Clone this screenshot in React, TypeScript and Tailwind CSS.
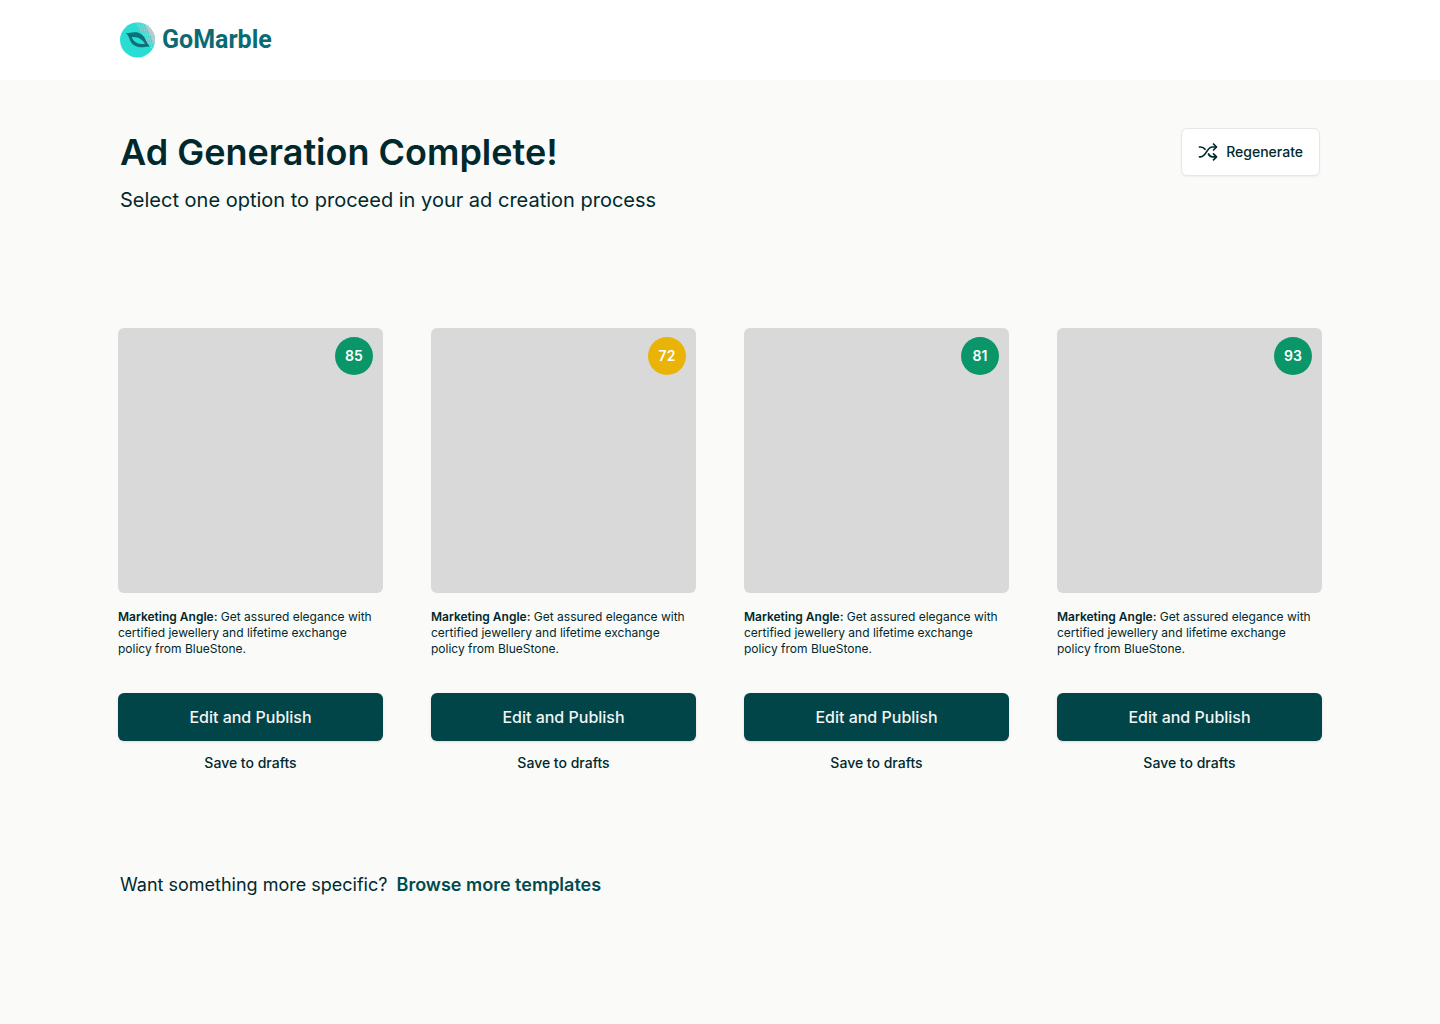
import { clsx } from 'clsx';

const ads = [
  { id: 1, score: 85 },
  { id: 2, score: 72 },
  { id: 3, score: 81 },
  { id: 4, score: 93 },
];

// staggered grey dots that fade the grey edge of the marble into the teal
const dots: [number, number][] = [];
for (let row = 0; row < 20; row++) {
  for (let col = 0; col < 5; col++) {
    dots.push([16 + row * 0.75 + col * 2 + (row % 2), 0.7 + row * 1.3]);
  }
}

function LogoMark() {
  return (
    <svg viewBox="0 0 36 36" className="h-9 w-9" aria-hidden="true">
      <defs>
        <clipPath id="marble">
          <circle cx="17.5" cy="18" r="17.5" />
        </clipPath>
      </defs>
      <g clipPath="url(#marble)">
        <rect width="36" height="36" fill="#2addd3" />
        <path d="M23 0C28 7 30 13 33 19L35 28L36 30V0Z" fill="#bcc9ca" />
        {dots.map(([x, y], i) => (
          <circle key={i} cx={x} cy={y} r="0.6" fill="#b4cccd" />
        ))}
      </g>
      <path
        fillRule="evenodd"
        fill="#0b7079"
        d="M6 11C9 11.2 12 9.8 16 10.2C21 10.8 24 14 25.5 17.5C26.5 20 28 22.5 30 24.5C26 24 23 26 18.5 25C13.5 24 10.5 20.5 9.5 17C8.800 14.500 7.500 12.500 6 11ZM11.800 15.200C13.500 19.500 18 22.800 25 22C22.500 17.500 18 14.500 11.800 15.200Z"
      />
    </svg>
  );
}

function ShuffleIcon() {
  return (
    <svg
      viewBox="0 0 20 20"
      className="h-5 w-5"
      fill="none"
      stroke="currentColor"
      strokeWidth="1.7"
      strokeLinecap="round"
      strokeLinejoin="round"
      aria-hidden="true"
    >
      <path d="M1.500 5H2.500C4.500 5 6 5.800 7 7.300" />
      <path d="M1.500 14.800H2.500C8.500 14.800 8.500 5 14.500 5H18" />
      <path d="M10.500 12C11.500 14 13 14.800 14.500 14.800H18" />
      <path d="M15.500 2L18.500 5L15.500 8" />
      <path d="M15.500 11.800L18.500 14.800L15.500 17.800" />
    </svg>
  );
}

function AdCard({ score }: { score: number }) {
  return (
    <article>
      <div className="relative aspect-square rounded-md bg-[#d9d9d9]">
        <span
          className={clsx(
            'absolute top-[9px] right-[10px] flex h-[38px] w-[38px] items-center justify-center rounded-full text-sm font-semibold text-white',
            score >= 80 ? 'bg-[#0a9669]' : 'bg-[#eab308]'
          )}
        >
          {score}
        </span>
      </div>
      <p className="mt-4 text-xs text-[#00292d]">
        <span className="font-semibold">Marketing Angle:</span> Get assured elegance with certified jewellery and
        lifetime exchange policy from BlueStone.
      </p>
      <button
        type="button"
        className="mt-9 h-12 w-full rounded-md bg-[#014549] text-base font-medium text-[#f3f4f4] shadow-sm"
      >
        Edit and Publish
      </button>
      <button type="button" className="mt-3 block w-full text-center text-sm font-medium text-[#00292d]">
        Save to drafts
      </button>
    </article>
  );
}

export default function App() {
  return (
    <div className="min-h-screen bg-[#fafaf8] font-['Inter',sans-serif] text-[#00292d]">
      <header className="flex h-20 items-center bg-white px-[120px]">
        <a href="#" className="flex items-center gap-1.5">
          <LogoMark />
          <span className="font-['Roboto',sans-serif] text-[25px] leading-8 font-bold text-[#0b6b74]">GoMarble</span>
        </a>
      </header>

      <main className="px-[120px] py-12">
        <div className="flex items-start justify-between">
          <div>
            <h1 className="text-4xl leading-12 font-semibold">Ad Generation Complete!</h1>
            <p className="mt-2 text-xl leading-8">Select one option to proceed in your ad creation process</p>
          </div>
          <button
            type="button"
            className="flex h-12 items-center gap-2 rounded-md border border-[#e3e8e8] bg-white px-4 text-sm font-medium shadow-xs"
          >
            <ShuffleIcon />
            Regenerate
          </button>
        </div>

        <section className="-mx-0.5 mt-28 grid grid-cols-4 gap-12">
          {ads.map((ad) => (
            <AdCard key={ad.id} score={ad.score} />
          ))}
        </section>

        <p className="mt-24 text-lg leading-8">
          Want something more specific?{' '}
          <a href="#" className="ml-1 font-semibold text-[#014b50]">
            Browse more templates
          </a>
        </p>
      </main>
    </div>
  );
}
